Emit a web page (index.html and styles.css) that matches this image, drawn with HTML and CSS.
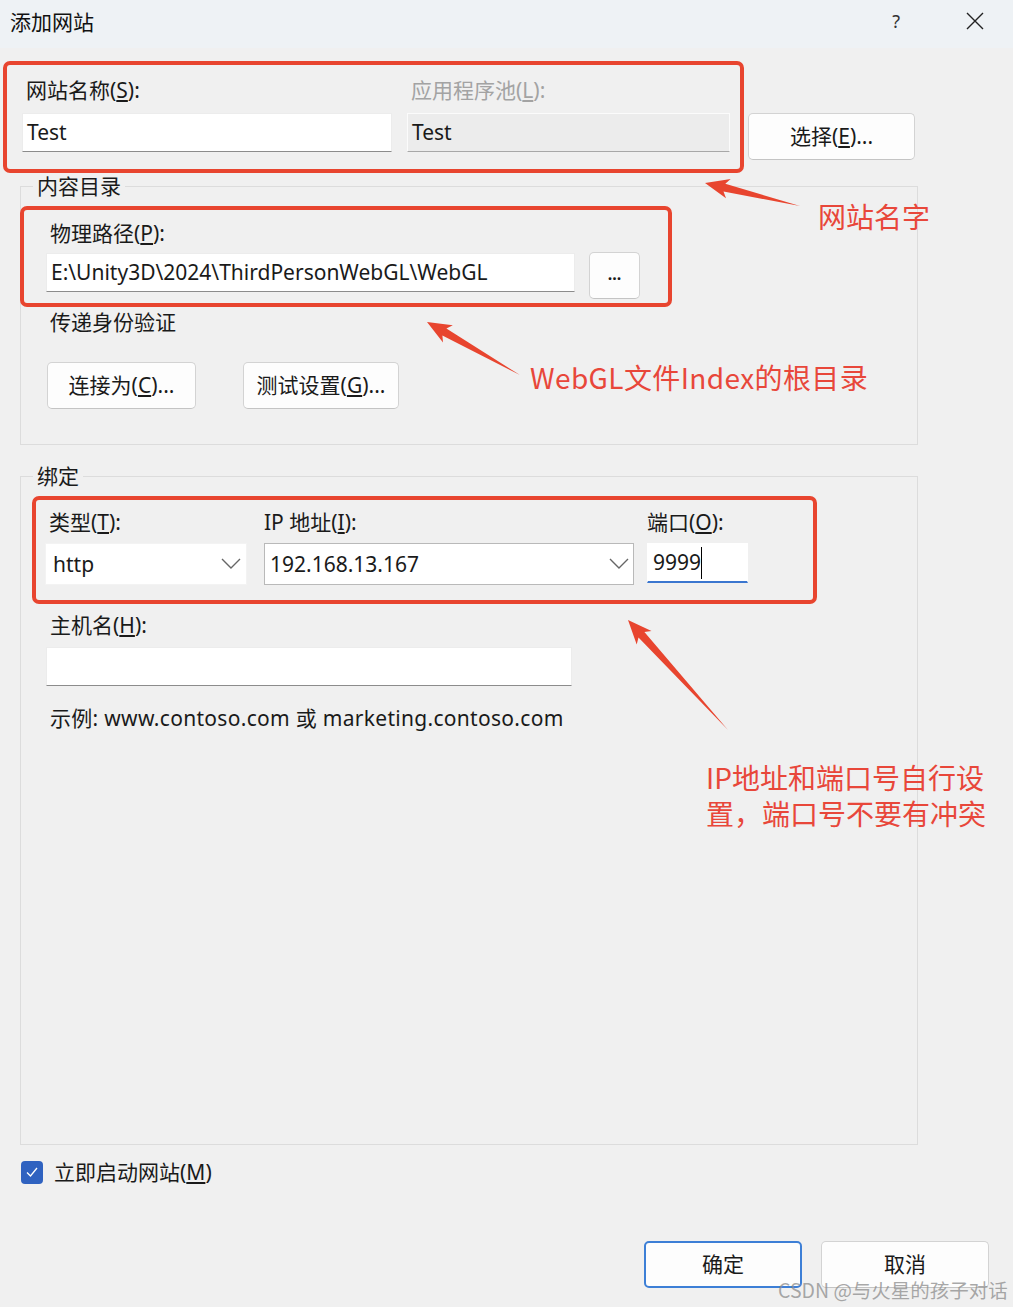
FILE: index.html
```html
<!DOCTYPE html>
<html lang="zh-CN">
  <head>
    <meta charset="UTF-8" />
    <title>添加网站</title>
    <link rel="stylesheet" href="styles.css">
  </head>
  <body>
    <div class="titlebar">
      <span class="title">添加网站</span>
      <div class="title-actions">
        <span class="help">?</span>
        <svg class="close" width="18" height="18" viewBox="0 0 18 18">
          <path d="M1 1 L17 17 M17 1 L1 17" stroke="#222" stroke-width="1.4" fill="none" />
        </svg>
      </div>
    </div>

    <!-- site name / app pool -->
    <div class="top-row">
      <div class="field site-name">
        <div class="label">网站名称(<u>S</u>):</div>
        <div class="textbox">Test</div>
      </div>
      <div class="field app-pool">
        <div class="label disabled">应用程序池(<u>L</u>):</div>
        <div class="textbox readonly">Test</div>
      </div>
      <button class="btn select-btn">选择(<u>E</u>)...</button>
    </div>

    <fieldset class="group">
      <legend>内容目录</legend>
      <div class="group-body content-body">
        <div class="label">物理路径(<u>P</u>):</div>
        <div class="path-row">
          <div class="textbox path">E:\Unity3D\2024\ThirdPersonWebGL\WebGL</div>
          <button class="btn browse">...</button>
        </div>
        <div class="label sub-title">传递身份验证</div>
        <div class="auth-row">
          <button class="btn connect-btn">连接为(<u>C</u>)...</button>
          <button class="btn test-btn">测试设置(<u>G</u>)...</button>
        </div>
      </div>
    </fieldset>

    <fieldset class="group binding">
      <legend>绑定</legend>
      <div class="group-body binding-body">
        <div class="binding-row">
          <div class="col type-col">
            <div class="label">类型(<u>T</u>):</div>
            <div class="combo plain">
              <span>http</span>
              <svg width="20" height="12" viewBox="0 0 20 12"><path d="M1 1 L10 10 L19 1" stroke="#666" stroke-width="1.4" fill="none" /></svg>
            </div>
          </div>
          <div class="col ip-col">
            <div class="label">IP 地址(<u>I</u>):</div>
            <div class="combo framed">
              <span>192.168.13.167</span>
              <svg width="20" height="12" viewBox="0 0 20 12"><path d="M1 1 L10 10 L19 1" stroke="#666" stroke-width="1.4" fill="none" /></svg>
            </div>
          </div>
          <div class="col port-col">
            <div class="label">端口(<u>O</u>):</div>
            <div class="textbox port">9999<span class="caret"></span></div>
          </div>
        </div>
        <div class="label host-label">主机名(<u>H</u>):</div>
        <div class="textbox host"></div>
        <div class="label example">示例: www.contoso.com 或 marketing.contoso.com</div>
      </div>
    </fieldset>

    <div class="start-row">
      <span class="checkbox">
        <svg width="14" height="12" viewBox="0 0 14 12"><path d="M2 6.5 L5.5 10 L12 2" stroke="#fff" stroke-width="1.3" fill="none" /></svg>
      </span>
      <span>立即启动网站(<u>M</u>)</span>
    </div>

    <div class="footer">
      <button class="btn ok-btn">确定</button>
      <button class="btn cancel-btn">取消</button>
    </div>

    <!-- red annotation layer drawn over the dialog -->
    <svg class="marks" width="1013" height="1307" viewBox="0 0 1013 1307">
      <g fill="none" stroke="#e8452f" stroke-width="4">
        <rect x="5" y="63" width="737" height="108" rx="5" />
        <rect x="22" y="208" width="648" height="97" rx="5" />
        <rect x="34" y="498" width="781" height="104" rx="5" />
      </g>
      <g fill="#e8452f">
        <polygon points="705,183 730.7,178.9 725.3,183.8 800,206 723.5,191.6 726,198.3" />
        <polygon points="427,322 452.8,325.2 446.4,328.4 520,375 442.4,335.4 443,342.6" />
        <polygon points="628,620 651.5,631.1 644.4,632.1 728,730 638.5,637.5 636.7,644.5" />
      </g>
    </svg>
    <div class="note note-name">网站名字</div>
    <div class="note note-root">WebGL文件Index的根目录</div>
    <div class="note note-ip">IP地址和端口号自行设<br>置，端口号不要有冲突</div>
    <div class="watermark">CSDN @与火星的孩子对话</div>
  </body>
</html>
```

FILE: styles.css
```css
* {
  box-sizing: border-box;
}

body {
  margin: 0;
  width: 1013px;
  height: 1307px;
  background-color: #f0f0f0;
  font-family: "Noto Sans", "Noto Sans CJK SC", sans-serif;
  font-size: 21px;
  color: #1a1a1a;
  position: relative;
  overflow: hidden;
}

u {
  text-underline-offset: 2px;
}

.titlebar {
  height: 48px;
  background-color: #eef2f5;
  display: flex;
  align-items: center;
  justify-content: space-between;
  padding: 0 29px 7px 10px;
}

.title {
  font-size: 21px;
  color: #111;
}

.title-actions {
  display: flex;
  align-items: center;
  gap: 66px;
}

.help {
  font-size: 18px;
  color: #333;
}

.label {
  line-height: 26px;
  padding-left: 4px;
  white-space: nowrap;
}

.label.disabled {
  color: #a3a3a3;
}

.textbox {
  height: 39px;
  background-color: #fff;
  border: 1px solid #ececec;
  border-bottom-color: #8c8c8c;
  padding: 0 4px;
  line-height: 37px;
  font-size: 21px;
  white-space: nowrap;
}

.textbox.readonly {
  background-color: #ececec;
  border-color: #fbfbfb;
  border-bottom-color: #a8a8a8;
}

.btn {
  font-family: inherit;
  font-size: 21px;
  color: #1a1a1a;
  background-color: #fdfdfd;
  border: 1px solid #d3d3d3;
  border-bottom-color: #c4c4c4;
  border-radius: 5px;
  height: 47px;
  padding: 0 0 3px;
  cursor: pointer;
}

/* site name row */
.top-row {
  display: flex;
  align-items: flex-start;
  gap: 15px;
  margin: 29px 0 0 22px;
}

.field .label {
  margin-bottom: 10px;
}

.site-name {
  width: 370px;
}

.app-pool {
  width: 323px;
}

.select-btn {
  width: 167px;
  margin: 36px 0 0 3px;
}

/* group boxes */
.group {
  margin: 14px 0 0 20px;
  width: 898px;
  border: 1px solid #dcdcdc;
  padding: 0;
}

.group legend {
  margin-left: 12px;
  padding: 0 4px;
  line-height: 24px;
}

.group-body {
  padding: 22px 0 35px 25px;
}

.path-row {
  display: flex;
  align-items: flex-start;
  gap: 14px;
  margin-top: 6px;
}

.path {
  width: 529px;
  margin-top: 1px;
}

.browse {
  width: 51px;
  font-size: 16px;
  font-weight: bold;
}

.sub-title {
  margin-top: 10px;
}

.auth-row {
  display: flex;
  gap: 47px;
  margin-top: 27px;
  padding-left: 1px;
}

.connect-btn {
  width: 149px;
}

.test-btn {
  width: 156px;
}

/* binding */
.binding {
  margin-top: 19px;
}

.binding-body {
  padding: 21px 0 413px 24px;
}

.binding-row {
  display: flex;
  gap: 17px;
}

.binding-row .label {
  margin-bottom: 8px;
}

.type-col {
  width: 202px;
}

.ip-col {
  width: 370px;
}

.ip-col .label,
.port-col .label {
  padding-left: 0;
}

.port-col {
  width: 101px;
  margin-left: -4px;
}

.combo {
  height: 42px;
  background-color: #fff;
  display: flex;
  align-items: center;
  justify-content: space-between;
  font-size: 21px;
}

.combo.plain {
  border: 1px solid #f3f3f3;
  padding: 0 5px 0 7px;
}

.combo.framed {
  border: 1px solid #b9b9b9;
  padding: 0 4px 0 5px;
}

.port {
  height: 40px;
  border: 1px solid #fff;
  border-bottom: 2px solid #3b76cf;
  padding: 0 5px;
  display: flex;
  align-items: center;
}

.caret {
  width: 1px;
  height: 32px;
  background-color: #000;
}

.host-label {
  margin-top: 27px;
  padding-left: 5px;
}

.host {
  width: 526px;
  margin: 9px 0 0 1px;
}

.example {
  margin-top: 19px;
  padding-left: 5px;
  letter-spacing: 0.3px;
}

/* bottom */
.start-row {
  display: flex;
  align-items: center;
  gap: 11px;
  margin: 14px 0 0 21px;
  line-height: 26px;
}

.checkbox {
  width: 22px;
  height: 23px;
  border-radius: 4px;
  background-color: #2f62c0;
  display: flex;
  align-items: center;
  justify-content: center;
}

.footer {
  display: flex;
  justify-content: flex-end;
  gap: 19px;
  margin-top: 56px;
  padding-right: 24px;
}

.ok-btn {
  width: 158px;
  border: 2px solid #3d7fd6;
}

.cancel-btn {
  width: 168px;
}

/* annotations */
.marks {
  position: absolute;
  top: 0;
  left: 0;
  pointer-events: none;
}

.note {
  position: absolute;
  color: #e8473a;
  font-family: "Noto Sans CJK SC", sans-serif;
  font-size: 28px;
  line-height: 36px;
  white-space: nowrap;
}

.note-name {
  left: 818px;
  top: 198px;
}

.note-root {
  left: 530px;
  top: 359px;
  letter-spacing: 0.4px;
}

.note-ip {
  left: 706px;
  top: 759px;
}

.watermark {
  position: absolute;
  left: 778px;
  top: 1280px;
  font-family: "Noto Sans CJK SC", sans-serif;
  font-size: 19.5px;
  line-height: 20px;
  color: rgba(140, 140, 140, 0.75);
  white-space: nowrap;
}
```
